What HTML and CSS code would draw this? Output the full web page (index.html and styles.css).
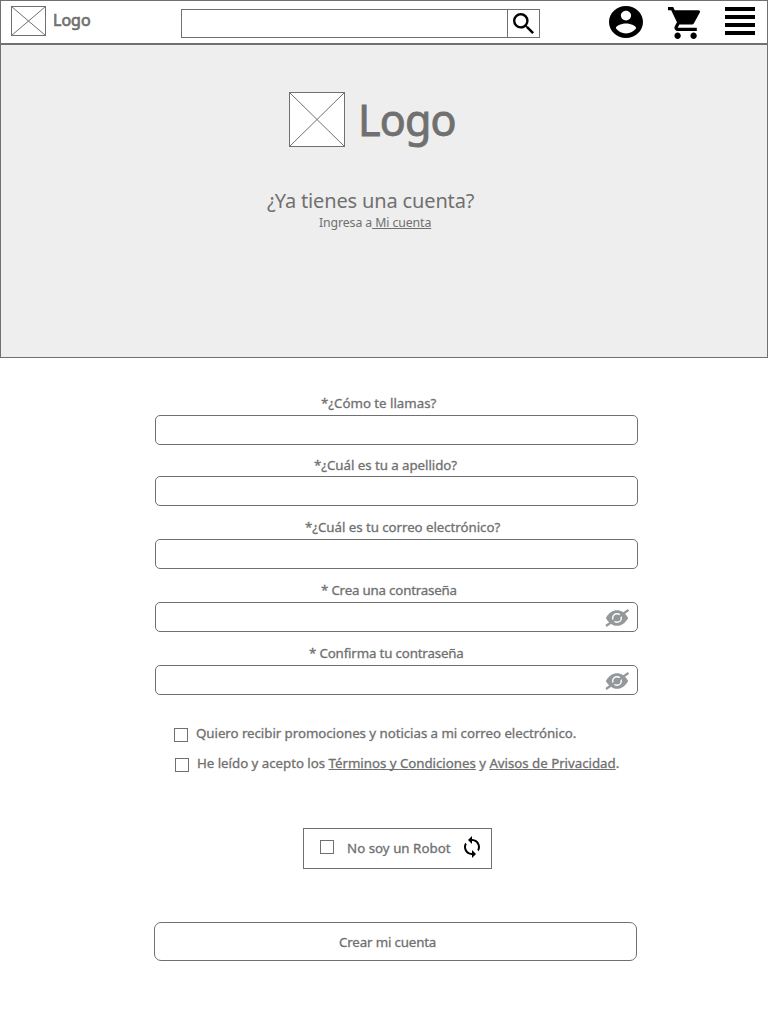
FILE: index.html
```html
<!DOCTYPE html>
<html lang="es">
<head>
<meta charset="utf-8">
<title>Crear cuenta</title>
<link rel="stylesheet" href="styles.css">
</head>
<body>
<header class="topbar">
  <a class="brand">
    <svg class="brand-mark" viewBox="0 0 35 30"><rect x=".5" y=".5" width="34" height="29"/><path d="M.5.5l34 29M34.5.5l-34 29"/></svg>
    <span class="brand-name">Logo</span>
  </a>
  <div class="search">
    <span class="search-field"></span>
    <span class="search-button"><svg viewBox="3 3 17.49 17.49"><path d="M15.5 14h-.79l-.28-.27A6.471 6.471 0 0 0 16 9.5 6.5 6.5 0 1 0 9.5 16c1.61 0 3.09-.59 4.23-1.57l.27.28v.79l5 4.99L20.49 19l-4.99-5zm-6 0C7.01 14 5 11.99 5 9.5S7.01 5 9.5 5 14 7.01 14 9.5 11.99 14 9.5 14z"/></svg></span>
  </div>
  <nav class="actions">
    <svg class="user" viewBox="2 2 20 20" preserveAspectRatio="none"><path d="M12 2C6.48 2 2 6.48 2 12s4.48 10 10 10 10-4.48 10-10S17.52 2 12 2zm0 3c1.66 0 3 1.34 3 3s-1.34 3-3 3-3-1.34-3-3 1.34-3 3-3zm0 14.2c-2.5 0-4.71-1.28-6-3.22.03-1.99 4-3.08 6-3.08 1.99 0 5.97 1.09 6 3.08-1.29 1.94-3.5 3.22-6 3.22z"/></svg>
    <svg class="cart" viewBox="1 2 20 20" preserveAspectRatio="none"><path d="M7 18c-1.100 0-1.990.9-1.990 2S5.900 22 7 22s2-.9 2-2-.9-2-2-2zM1 2v2h2l3.600 7.590-1.350 2.450c-.16.280-.25.610-.25.960 0 1.100.9 2 2 2h12v-2H7.420c-.14 0-.25-.11-.25-.25l.03-.12.900-1.630h7.450c.75 0 1.410-.41 1.750-1.030l3.580-6.490A1 1 0 0 0 20 4H5.210l-.94-2H1zm16 16c-1.100 0-1.990.9-1.990 2s.89 2 1.990 2 2-.9 2-2-.9-2-2-2z"/></svg>
    <span class="menu"><i></i><i></i><i></i><i></i></span>
  </nav>
</header>
<section class="hero">
  <div class="hero-logo">
    <svg class="hero-mark" viewBox="0 0 56 55"><rect x=".5" y=".5" width="55" height="54"/><path d="M.5.5l55 54M55.500.5l-55 54"/></svg>
    <span class="hero-name">Logo</span>
  </div>
  <h1 class="question">¿Ya tienes una cuenta?</h1>
  <p class="login">Ingresa a<a class="link"> Mi cuenta</a></p>
</section>
<main class="form">
  <label class="label name">*¿Cómo te llamas?</label>
  <div class="input"></div>
  <label class="label surname">*¿Cuál es tu a apellido?</label>
  <div class="input"></div>
  <label class="label mail">*¿Cuál es tu correo electrónico?</label>
  <div class="input"></div>
  <label class="label pass">* Crea una contraseña</label>
  <div class="input"><svg class="eye" viewBox="0 0 24 18"><path d="M.8 9C4 3.300 8 1.200 12 1.200S20 3.300 23.200 9C20 14.700 16 16.800 12 16.800S4 14.700 .8 9z" fill="#95989a"/><circle cx="12" cy="9" r="4.300" fill="none" stroke="#fff" stroke-width="1.400"/><path d="M1 17L23.500 1" stroke="#95989a" stroke-width="2.200"/></svg></div>
  <label class="label confirm">* Confirma tu contraseña</label>
  <div class="input"><svg class="eye" viewBox="0 0 24 18"><path d="M.8 9C4 3.300 8 1.200 12 1.200S20 3.300 23.200 9C20 14.700 16 16.800 12 16.800S4 14.700 .8 9z" fill="#95989a"/><circle cx="12" cy="9" r="4.300" fill="none" stroke="#fff" stroke-width="1.400"/><path d="M1 17L23.500 1" stroke="#95989a" stroke-width="2.200"/></svg></div>
  <div class="check promos"><span class="box"></span><span class="text">Quiero recibir promociones y noticias a mi correo electrónico.</span></div>
  <div class="check terms"><span class="box"></span><span class="text">He leído y acepto los <a class="link">Términos y Condiciones</a> y <a class="link">Avisos de Privacidad</a>.</span></div>
  <div class="robot"><span class="box"></span><span class="text">No soy un Robot</span>
    <svg viewBox="4 1 16 22" preserveAspectRatio="none"><path d="M12 4V1L8 5l4 4V6c3.310 0 6 2.690 6 6 0 1.010-.25 1.970-.7 2.800l1.460 1.460A7.930 7.930 0 0 0 20 12c0-4.420-3.580-8-8-8zm0 14c-3.310 0-6-2.690-6-6 0-1.010.25-1.970.7-2.800L5.240 7.740A7.930 7.930 0 0 0 4 12c0 4.420 3.580 8 8 8v3l4-4-4-4v3z"/></svg>
  </div>
  <div class="submit"><span class="text">Crear mi cuenta</span></div>
</main>
</body>
</html>
```
FILE: styles.css
```css
* { box-sizing: border-box; }
body {
  margin: 0;
  width: 768px;
  height: 1024px;
  overflow: hidden;
  background: #fff;
  color: #707070;
  font-family: "Noto Sans", "Open Sans", sans-serif;
  font-size: 13.3px;
  letter-spacing: -0.05px;
}
svg { display: block; flex: none; }
.link { text-decoration: underline; text-decoration-skip-ink: none; text-underline-offset: 1px; text-decoration-thickness: 1px; }
.topbar {
  display: flex;
  align-items: flex-start;
  height: 44px;
  border: 1px solid #707070;
}
.brand { display: flex; width: 180px; padding: 5px 0 0 10px; }
.brand-mark { width: 35px; height: 30px; }
.brand-mark, .hero-mark { fill: #fff; stroke: #707070; stroke-width: 1; }
.brand-name {
  margin: 3px 0 0 7px;
  font-size: 16px;
  line-height: 22px;
  letter-spacing: 0;
  -webkit-text-stroke: 0.7px #707070;
}
.search {
  display: flex;
  width: 359px;
  height: 29px;
  margin-top: 8px;
  border: 1px solid #707070;
}
.search-field { width: 325px; }
.search-button { flex: 1; padding: 3px 0 0 5px; border-left: 1px solid #707070; }
.search-button svg { width: 21px; height: 21px; }
.actions { display: flex; padding: 5px 0 0 69px; }
.user { width: 34px; height: 32px; }
.cart { width: 32px; height: 32px; margin: 1px 0 0 25px; }
.menu { display: grid; gap: 4px; width: 30px; height: 28px; margin: 1px 0 0 25px; }
.menu i { height: 4px; background: #000; }

.hero {
  height: 314px;
  padding-top: 47px;
  border: 1px solid #707070;
  background: #eee;
}
.hero-logo { display: flex; height: 55px; padding-left: 288px; }
.hero-mark { width: 56px; height: 55px; }
.hero-name {
  margin: -2px 0 0 13px;
  font-size: 43px;
  line-height: 60px;
  letter-spacing: -0.8px;
  -webkit-text-stroke: 0.9px #707070;
}
.question {
  margin: 40px 0 0 266px;
  font-size: 20px;
  font-weight: 400;
  line-height: 28px;
  letter-spacing: -0.15px;
  white-space: nowrap;
}
.login { margin: -1px 0 0 318px; font-size: 12.3px; line-height: 18px; letter-spacing: -0.1px; white-space: nowrap; }

.form { width: 483px; margin-left: 155px; padding-top: 35px; }
.label, .text { white-space: nowrap; line-height: 20px; -webkit-text-stroke: 0.3px #707070; }
.label { display: block; margin-bottom: 2px; }
.name { padding-left: 166px; letter-spacing: -0.02px; }
.surname { padding-left: 159px; margin: 10px 0 1px; }
.mail { padding-left: 150px; margin: 11px 0 2px; }
.pass { padding-left: 166px; margin: 11px 0 2px; letter-spacing: -0.19px; }
.confirm { padding-left: 154px; margin: 11px 0 2px; letter-spacing: -0.16px; }
.input {
  display: flex;
  justify-content: flex-end;
  height: 30px;
  padding: 6px 8px 0 0;
  border: 1px solid #707070;
  border-radius: 5px;
}
.eye { width: 24px; height: 18px; }
.box { flex: none; width: 14px; height: 14px; border: 1px solid #707070; }
.check { display: flex; height: 20px; }
.check .box { margin-top: 5px; }
.promos { margin: 28px 0 0 19px; }
.terms { margin: 10px 0 0 20px; letter-spacing: -0.03px; }
.check .text { margin-left: 8px; }
.robot {
  display: flex;
  width: 189px;
  height: 41px;
  margin: 55px 0 0 148px;
  padding-left: 16px;
  border: 1px solid #707070;
  letter-spacing: 0.02px;
}
.robot .box { margin-top: 11px; }
.robot .text { width: 104px; margin: 9px 0 0 13px; }
.robot svg { width: 16px; height: 22px; margin: 7px 0 0 13px; }
.submit {
  height: 39px;
  margin: 53px 0 0 -1px;
  padding: 9px 0 0 184px;
  width: 483px;
  border: 1px solid #707070;
  border-radius: 7px;
  letter-spacing: -0.15px;
}
```
